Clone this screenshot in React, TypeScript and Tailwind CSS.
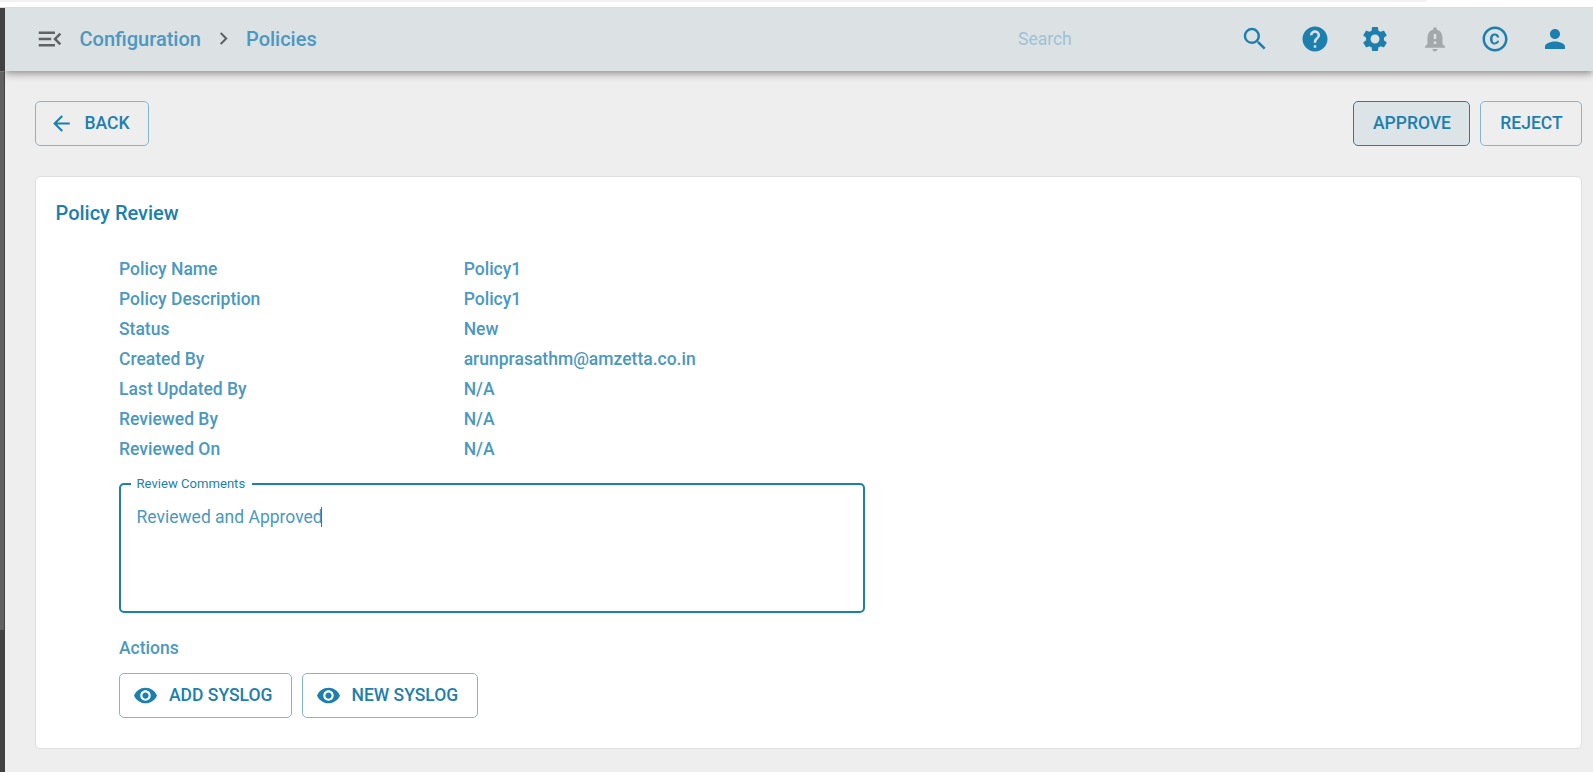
import type { ReactNode } from "react";
import {
  MdArrowBack,
  MdChevronRight,
  MdCopyright,
  MdHelp,
  MdMenuOpen,
  MdNotificationImportant,
  MdPerson,
  MdSearch,
  MdSettings,
  MdVisibility,
} from "react-icons/md";

const details: [string, string][] = [
  ["Policy Name", "Policy1"],
  ["Policy Description", "Policy1"],
  ["Status", "New"],
  ["Created By", "arunprasathm@amzetta.co.in"],
  ["Last Updated By", "N/A"],
  ["Reviewed By", "N/A"],
  ["Reviewed On", "N/A"],
];

function Button({ children, className }: { children: ReactNode; className: string }) {
  return (
    <button
      className={`flex h-[45px] items-center rounded-[5px] border text-[17.5px] font-medium whitespace-nowrap text-[#1d7fae] ${className}`}
    >
      {children}
    </button>
  );
}

function Sidebar() {
  return (
    <aside className="flex w-[5px] shrink-0 flex-col">
      <div className="h-[63px] bg-[#424242]" />
      <div className="h-[559px] border-t border-r border-t-[#777777] border-r-[#424242] bg-[#616161]" />
      <div className="flex-1 bg-[#424242]" />
    </aside>
  );
}

function Header() {
  return (
    <header className="z-10 flex h-[63px] shrink-0 items-center bg-[#dce1e4] pr-[23px] pb-[2px] pl-[30px] shadow-[0_2px_5px_-1px_rgba(0,0,0,0.2),0_5px_6px_0_rgba(0,0,0,0.14),0_1px_12px_0_rgba(0,0,0,0.12)]">
      <MdMenuOpen className="size-[30px] text-[#5f6366]" />
      <nav className="flex items-center pl-[14.5px] text-[20px] font-medium text-[#4b98c0]">
        <span className="w-[121px]">Configuration</span>
        <MdChevronRight className="mr-[10.5px] ml-[10px] size-[25px] text-[#5f6366]" />
        <span>Policies</span>
      </nav>
      <div className="ml-auto flex items-center gap-[30px] text-[#1d7fae]">
        <span className="w-[192px] pt-px text-[17.5px] text-[#9dc3d6]">Search</span>
        <MdSearch className="size-[30px]" />
        <MdHelp className="size-[30px]" />
        <MdSettings className="size-[30px]" />
        <MdNotificationImportant className="size-[30px] text-[#a3a8aa]" />
        <MdCopyright className="size-[30px]" />
        <MdPerson className="size-[30px]" />
      </div>
    </header>
  );
}

export default function App() {
  return (
    <div className="flex h-[772px] w-full flex-col overflow-hidden bg-white font-['Roboto',sans-serif]">
      <div className="h-[2px] w-[1427px] shrink-0 rounded-br-[4px] bg-[#f1f1f1]" />
      <div className="mt-[5px] h-px shrink-0 bg-[#d9dbdc]" />
      <div className="flex min-h-0 flex-1 overflow-hidden">
        <Sidebar />
        <div className="flex min-w-0 flex-1 flex-col overflow-hidden bg-[#eeeeee]">
          <Header />
          <main className="flex flex-col pt-[30px] pr-[11px] pl-[30px]">
            <div className="flex justify-between">
              <Button className="w-[114px] border-[#82b6d0] pl-[13px]">
                <MdArrowBack className="mr-[10.5px] size-[25px]" />
                BACK
              </Button>
              <div className="flex gap-[10px]">
                <Button className="w-[117px] justify-center border-[#1d7fae] bg-[#dce4e8] pl-px">APPROVE</Button>
                <Button className="w-[102px] justify-center border-[#82b6d0] pl-px">REJECT</Button>
              </div>
            </div>
            <section className="mt-[30px] h-[573px] rounded-[5px] border border-[#dedede] bg-white pt-[21px] pl-[19.5px]">
              <h2 className="text-[20px] leading-[30px] font-medium text-[#1d7fae]">Policy Review</h2>
              <div className="pt-[26px] pl-[63.5px] text-[17.5px] font-medium text-[#4b98c0]">
                <dl>
                  {details.map(([label, value]) => (
                    <div key={label} className="flex h-[30px] items-center">
                      <dt className="w-[344.7px]">{label}</dt>
                      <dd>{value}</dd>
                    </div>
                  ))}
                </dl>
                <fieldset className="mt-[12px] h-[137px] w-[746px] rounded-[5px] border-2 border-[#1d7fae] px-[10px] font-normal">
                  <legend className="h-[16px] pr-[7px] pl-[5.5px] text-[13.1px] leading-[16px] text-[#1d7fae]">
                    Review Comments
                  </legend>
                  <div className="flex items-center pt-[14px] pl-[5.5px] leading-[22px]">
                    Reviewed and Approved
                    <span className="-ml-[2px] h-[20px] w-px bg-[#1d7fae]" />
                  </div>
                </fieldset>
                <h3 className="mt-[24px] leading-[22px]">Actions</h3>
                <div className="mt-[14px] flex gap-[10px]">
                  <Button className="w-[173px] border-[#82b6d0] pl-[13px]">
                    <MdVisibility className="mr-[11px] size-[25px]" />
                    ADD SYSLOG
                  </Button>
                  <Button className="w-[176px] border-[#82b6d0] pl-[13px]">
                    <MdVisibility className="mr-[10.5px] size-[25px]" />
                    NEW SYSLOG
                  </Button>
                </div>
              </div>
            </section>
          </main>
        </div>
      </div>
    </div>
  );
}
